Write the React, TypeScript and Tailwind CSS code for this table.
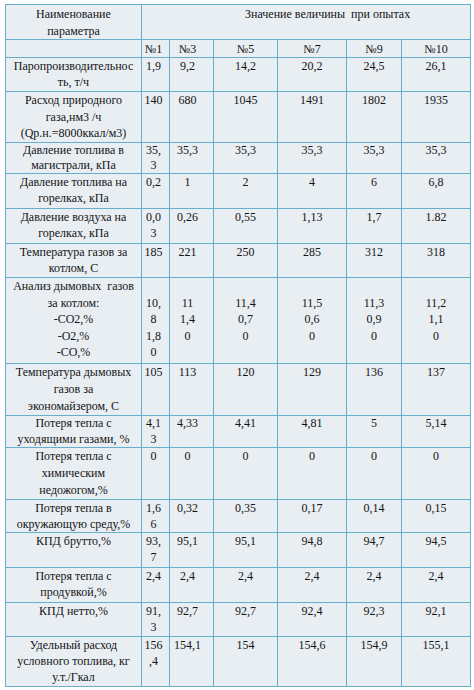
import React from 'react';

type Row = { name: string[]; values: string[]; h: string; lh: string };

const rows: Row[] = [
  { name: ['Паропроизводительнос', 'ть, т/ч'], values: ['1,9', '9,2', '14,2', '20,2', '24,5', '26,1'], h: 'h-[34px]', lh: 'leading-[16px]' },
  { name: ['Расход природного', 'газа,нм3 /ч', '(Qр.н.=8000ккал/м3)'], values: ['140', '680', '1045', '1491', '1802', '1935'], h: 'h-[51px]', lh: 'leading-[16.5px]' },
  { name: ['Давление топлива в', 'магистрали, кПа'], values: ['35,\n3', '35,3', '35,3', '35,3', '35,3', '35,3'], h: 'h-[31px]', lh: 'leading-[15px]' },
  { name: ['Давление топлива на', 'горелках, кПа'], values: ['0,2', '1', '2', '4', '6', '6,8'], h: 'h-[35px]', lh: 'leading-[16px]' },
  { name: ['Давление воздуха на', 'горелках, кПа'], values: ['0,0\n3', '0,26', '0,55', '1,13', '1,7', '1.82'], h: 'h-[35px]', lh: 'leading-[16px]' },
  { name: ['Температура газов за', 'котлом, С'], values: ['185', '221', '250', '285', '312', '318'], h: 'h-[34px]', lh: 'leading-[16px]' },
  {
    name: ['Анализ дымовых  газов', 'за котлом:', '-CO2,%', '-O2,%', '-CO,%'],
    values: ['\u00a0\n10,\n8\n1,8\n0', '\u00a0\n11\n1,4\n0', '\u00a0\n11,4\n0,7\n0', '\u00a0\n11,5\n0,6\n0', '\u00a0\n11,3\n0,9\n0', '\u00a0\n11,2\n1,1\n0'],
    h: 'h-[86px]',
    lh: 'leading-[16.5px]',
  },
  { name: ['Температура дымовых', 'газов за', 'экономайзером, С'], values: ['105', '113', '120', '129', '136', '137'], h: 'h-[52px]', lh: 'leading-[17px]' },
  { name: ['Потеря тепла с', 'уходящими газами, %'], values: ['4,1\n3', '4,33', '4,41', '4,81', '5', '5,14'], h: 'h-[32px]', lh: 'leading-[15.5px]' },
  { name: ['Потеря тепла с', 'химическим', 'недожогом,%'], values: ['0', '0', '0', '0', '0', '0'], h: 'h-[52px]', lh: 'leading-[17px]' },
  { name: ['Потеря тепла в', 'окружающую среду,%'], values: ['1,6\n6', '0,32', '0,35', '0,17', '0,14', '0,15'], h: 'h-[33px]', lh: 'leading-[16px]' },
  { name: ['КПД брутто,%'], values: ['93,\n7', '95,1', '95,1', '94,8', '94,7', '94,5'], h: 'h-[35px]', lh: 'leading-[16px]' },
  { name: ['Потеря тепла с', 'продувкой,%'], values: ['2,4', '2,4', '2,4', '2,4', '2,4', '2,4'], h: 'h-[35px]', lh: 'leading-[16px]' },
  { name: ['КПД нетто,%'], values: ['91,\n3', '92,7', '92,7', '92,4', '92,3', '92,1'], h: 'h-[34px]', lh: 'leading-[16px]' },
  { name: ['Удельный расход', 'условного топлива, кг', 'у.т./Гкал'], values: ['156\n,4', '154,1', '154', '154,6', '154,9', '155,1'], h: 'h-[50px]', lh: 'leading-[16px]' },
];

const headers = ['№1', '№3', '№5', '№7', '№9', '№10'];

// padding per value column, the Word table isn't quite centred in the narrow ones
const valuePad = ['pl-[2px] pr-[6px]', 'pl-[2px] pr-[10px]', 'px-[3px]', 'px-[3px]', 'px-[3px]', 'px-[3px]'];

const serif = "font-['Liberation_Serif']";
const cell = `border border-[#68adcb] align-top text-[12px] text-[#141414] ${serif}`;

const Lines: React.FC<{ lines: string[] }> = ({ lines }) => (
  <>
    {lines.map((l, i) => (
      <div key={i} className="whitespace-pre">
        {l}
      </div>
    ))}
  </>
);

export default function App() {
  return (
    <div className={`min-h-screen bg-white pl-[5px] pt-[4px] ${serif}`}>
      <table className={`table-fixed border-collapse bg-[#e9eef3] w-[465px] ${serif}`}>
        <colgroup>
          <col className="w-[136px]" />
          <col className="w-[28px]" />
          <col className="w-[44px]" />
          <col className="w-[64px]" />
          <col className="w-[69px]" />
          <col className="w-[55px]" />
          <col className="w-[69px]" />
        </colgroup>
        <tbody>
          <tr className="h-[35px]">
            <td className={`${cell} leading-[16.5px] text-center px-[4px] pt-[1px]`}>
              <Lines lines={['Наименование', 'параметра']} />
            </td>
            <td colSpan={6} className={`${cell} leading-[16.5px] text-left pl-[103px] pt-[1px]`}>
              <Lines lines={['Значение величины  при опытах']} />
            </td>
          </tr>
          <tr className="h-[18px]">
            <td className={`${cell} leading-[16px]`}></td>
            {headers.map((h, i) => (
              <td key={h} className={`${cell} leading-[16px] pt-[1px] text-center ${valuePad[i]}`}>
                <Lines lines={[h]} />
              </td>
            ))}
          </tr>
          {rows.map((r, ri) => (
            <tr key={ri} className={r.h}>
              <td className={`${cell} ${r.lh} text-center px-[2px]`}>
                <Lines lines={r.name} />
              </td>
              {r.values.map((v, i) => (
                <td key={i} className={`${cell} ${r.lh} text-center ${valuePad[i]}`}>
                  <Lines lines={v.split('\n')} />
                </td>
              ))}
            </tr>
          ))}
        </tbody>
      </table>
    </div>
  );
}
